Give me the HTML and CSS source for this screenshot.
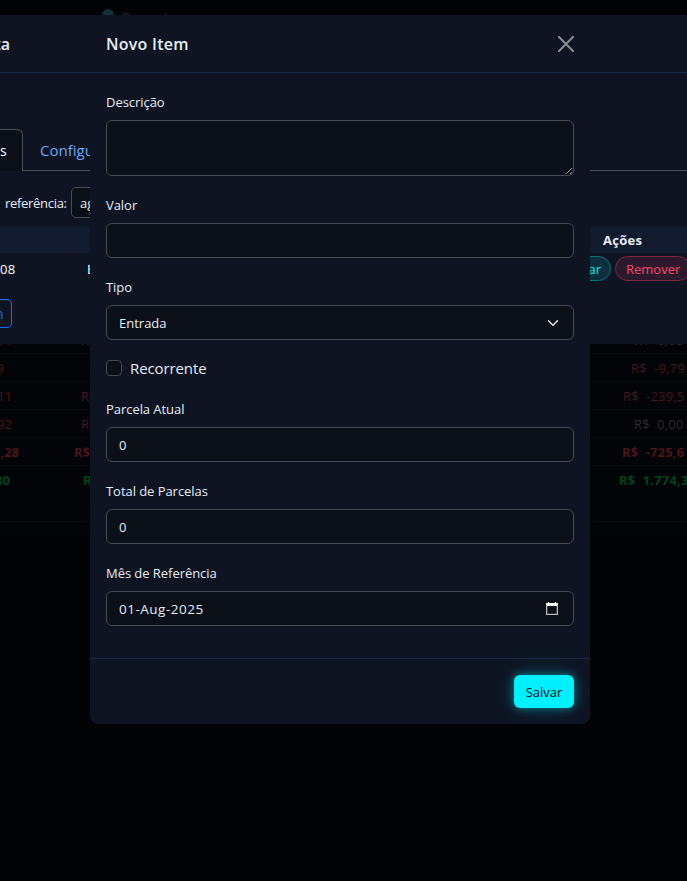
FILE: index.html
```html
<!DOCTYPE html>
<html lang="pt-BR">
<head>
<meta charset="utf-8">
<title>Novo Item</title>
<link rel="stylesheet" href="styles.css">
</head>
<body>
<main class="page">
  <section class="panel">
    <div class="panel-title"><i></i><span>Parceria</span></div>
    <div class="row r0"><span>71</span><span>R$</span><span>R$&nbsp; 0,00</span></div>
    <div class="row r1 neg"><span>9</span><span></span><span>R$&nbsp; -9,79</span></div>
    <div class="row r2 neg"><span>11</span><span>R$</span><span>R$&nbsp; -239,5</span></div>
    <div class="row r3 neg"><span>92</span><span>R$</span><span class="zero">R$&nbsp; 0,00</span></div>
    <div class="row r4 neg bold"><span>,28</span><span>R$</span><span>R$&nbsp; -725,6</span></div>
    <div class="row r5 pos bold"><span>80</span><span>R$</span><span>R$&nbsp; 1.774,3</span></div>
  </section>
</main>

<section class="sheet">
  <header class="sheet-head"><span>ta</span></header>
  <nav class="tabs"><span class="tab active">s</span><span class="tab">Configu</span></nav>
  <div class="filter"><span class="filter-label">referência:</span><span class="month">ag</span></div>
  <div class="items-head"><span>Ações</span></div>
  <div class="items-row">
    <span class="day">08</span><span class="kind">E</span>
    <span class="pill edit">Editar</span><span class="pill remove">Remover</span>
  </div>
  <div class="add"><span>n</span></div>
</section>

<form class="dialog">
  <header class="dialog-head">
    <h1><span>Novo Item</span></h1>
    <svg class="close" viewBox="0 0 16 16"><path d="M.8.8l14.4 14.4M15.2.8L.8 15.2"/></svg>
  </header>
  <div class="dialog-body">
    <label class="field f1"><span class="label">Descrição</span><textarea class="control area"></textarea></label>
    <label class="field f2"><span class="label">Valor</span><span class="control"></span></label>
    <label class="field f3"><span class="label">Tipo</span><span class="control"><span class="value">Entrada</span>
      <svg class="chevron" viewBox="0 0 16 16"><path d="m2 5 6 6 6-6"/></svg></span></label>
    <label class="check"><span class="box"></span><span class="check-text">Recorrente</span></label>
    <label class="field f4"><span class="label">Parcela Atual</span><span class="control"><span class="value">0</span></span></label>
    <label class="field f5"><span class="label">Total de Parcelas</span><span class="control"><span class="value">0</span></span></label>
    <label class="field f6"><span class="label">Mês de Referência</span><span class="control"><span class="value date">01-Aug-2025</span>
      <svg class="calendar" viewBox="0 0 12 13"><path class="solid" d="M0 1h2V0h1v1h6V0h1v1h2v3H0z"/><path class="frame" d="M.65 3v9.3h10.7V3"/></svg></span></label>
  </div>
  <footer class="dialog-foot"><button type="button" class="save"><span>Salvar</span></button></footer>
</form>
</body>
</html>
```

FILE: styles.css
```css
* { box-sizing: border-box; }
body {
  margin: 0;
  width: 687px;
  height: 881px;
  position: relative;
  overflow: hidden;
  background: #020304;
  color: #e6edf7;
  font: 14px/20px "Open Sans", "Noto Sans", sans-serif;
}
span { white-space: nowrap; }

/* dimmed page */
.page { height: 881px; background: linear-gradient(#020307 0, #030408 520px, #020304 560px); }
.panel { height: 522px; border-bottom: 1px solid #090b0f; overflow: hidden; }
.panel-title {
  margin-left: 84px;
  height: 326px;
  padding: 8px 0 0 17px;
  border-left: 1px solid #07080c;
  border-top-left-radius: 16px;
  display: flex;
  gap: 8px;
  color: #24272b;
}
.panel-title i { width: 12px; height: 12px; margin-top: 1px; border-radius: 50%; background: #10303a; }
.row {
  height: 28px;
  display: grid;
  grid-template-columns: 70px 540px 100px;
  border-bottom: 1px solid #080a0d;
  line-height: 29px;
  font-size: 13px;
  color: #24272b;
}
.row span { display: block; }
.row span:first-child { justify-self: start; width: 40px; text-align: right; margin-left: -28px; }
.row span:nth-child(2) { padding-left: 11px; }
.row span:nth-child(3) { padding-left: 24px; letter-spacing: .2px; }
.neg { color: #4b151e; }
.pos { color: #00431f; }
.bold { font-weight: 700; }
.zero { color: #292c30; }
.r0 span:nth-child(-n+2) { color: #4b151e; }
.r1 span:first-child { margin-left: -36px; }
.r1 span:nth-child(3) { padding-left: 21px; }
.r2 span:nth-child(3) { padding-left: 13px; }
.r4 span:first-child { margin-left: -21px; }
.r4 span:nth-child(2) { padding-left: 4px; }
.r4 span:nth-child(3) { padding-left: 12px; }
.r5 span:first-child { margin-left: -30px; }
.r5 span:nth-child(2) { padding-left: 13px; }
.r5 span:nth-child(3) { padding-left: 9px; }
.r5 { border-bottom: 0; }

/* underlying dialog */
.sheet {
  position: absolute;
  top: 15px;
  left: 0;
  width: 687px;
  height: 329px;
  overflow: hidden;
  background: #0e1422;
}
.sheet-head { height: 58px; border-bottom: 1px solid #1c2945; padding-top: 19px; font-size: 16px; font-weight: 600; }
.sheet-head span { display: block; width: 10px; direction: rtl; }
.tabs { margin-top: 56px; height: 42px; display: flex; font-size: 15px; line-height: 42px; }
.tab { padding-left: 17px; color: #6ea8fe; border-bottom: 1px solid #4a4f57; flex: 1; }
.tab.active {
  flex: 0 0 23px;
  padding: 0;
  color: #fff;
  font-size: 14px;
  background: #0b0f18;
  border: 1px solid #4a4f57;
  border-width: 1px 1px 0 0;
  border-top-right-radius: 6px;
}
.filter { height: 55px; display: flex; align-items: flex-start; padding: 16px 0 0 5px; }
.filter-label { width: 66px; font-size: 13px; line-height: 32px; letter-spacing: -.3px; }
.month { width: 90px; height: 31px; border: 1px solid #454a53; border-radius: 5px; background: #0b0f18; padding-left: 8px; font-size: 13px; line-height: 31px; }
.items-head { height: 27px; background: #121b2d; padding-left: 603px; font-size: 13px; font-weight: 700; line-height: 29px; letter-spacing: .3px; }
.items-row { height: 56px; display: flex; align-items: flex-start; padding-top: 3px; font-size: 13px; }
.day { line-height: 27px; width: 87px; color: #fff; letter-spacing: .4px; }
.kind { line-height: 27px; width: 463px; color: #fff; }
.pill { height: 25px; border: 1px solid; border-radius: 13px; line-height: 25px; flex-shrink: 0; }
.day, .kind { flex-shrink: 0; }
.edit { width: 61px; padding-right: 9px; margin-right: 4px; text-align: right; color: #00f0ff; border-color: #07727e; background: #0d2e3d; }
.remove { width: 76px; padding-left: 10px; color: #ff4668; border-color: #7b2a42; background: #2c1a2c; }
.add { width: 12px; height: 29px; margin-top: -10px; border: 1px solid #0d6efd; border-left: 0; border-radius: 0 5px 5px 0; color: #0d6efd; line-height: 28px; }
.add span { display: block; margin-left: -5px; }

/* item dialog */
.dialog {
  position: absolute;
  left: 90px;
  top: 15px;
  width: 500px;
  height: 709px;
  overflow: hidden;
  background: #0e1422;
  border-radius: 0 0 8px 8px;
}
.dialog-head { height: 58px; padding: 0 16px; border-bottom: 1px solid #1c2945; display: flex; justify-content: space-between; align-items: center; }
h1 { margin: 0; font-size: 16px; line-height: 24px; font-weight: 600; letter-spacing: .25px; }
.close { width: 16px; height: 16px; stroke: #8a8d94; stroke-width: 2; stroke-linecap: round; fill: none; }
.dialog-body { height: 585px; padding: 19px 16px 0; display: flex; flex-direction: column; }
.field { display: block; height: 82px; }
.f1 { height: 103px; }
.label { display: block; height: 28px; font-size: 13px; line-height: 20px; letter-spacing: -.05px; }
.control {
  display: flex;
  align-items: center;
  justify-content: space-between;
  width: 468px;
  height: 35px;
  padding: 0 12px;
  border: 1px solid #454a53;
  border-radius: 6px;
  background: #0b0f18;
  font-size: 13px;
}
.date { font-size: 13.5px; letter-spacing: .5px; }
.area { display: block; height: 56px; resize: vertical; outline: 0; color-scheme: dark; }
.chevron { width: 12px; height: 12px; margin-right: 2px; fill: none; stroke: #dee2e6; stroke-width: 2; stroke-linecap: round; stroke-linejoin: round; }
.check { height: 40px; display: flex; align-items: flex-start; font-size: 15px; }
.box { width: 16px; height: 16px; margin-top: 1px; border: 1px solid #454a53; border-radius: 4px; background: #0b0f18; }
.check-text { margin-left: 8px; line-height: 18px; letter-spacing: -.1px; }
.calendar { width: 12px; height: 13px; margin-right: 3px; }
.solid { fill: #fff; }
.frame { fill: none; stroke: #b7b8bb; stroke-width: 1.3; }
.dialog-foot { height: 66px; border-top: 1px solid #1c2945; padding: 16px; display: flex; justify-content: flex-end; }
.save {
  width: 60px;
  height: 33px;
  padding: 0;
  border: 0;
  border-radius: 6px;
  background: #00f0ff;
  color: #0b0f18;
  font: 13px/20px "Open Sans", sans-serif;
  box-shadow: 0 0 10px rgba(0, 240, 255, .5), 0 0 30px rgba(0, 240, 255, .12);
}
```
